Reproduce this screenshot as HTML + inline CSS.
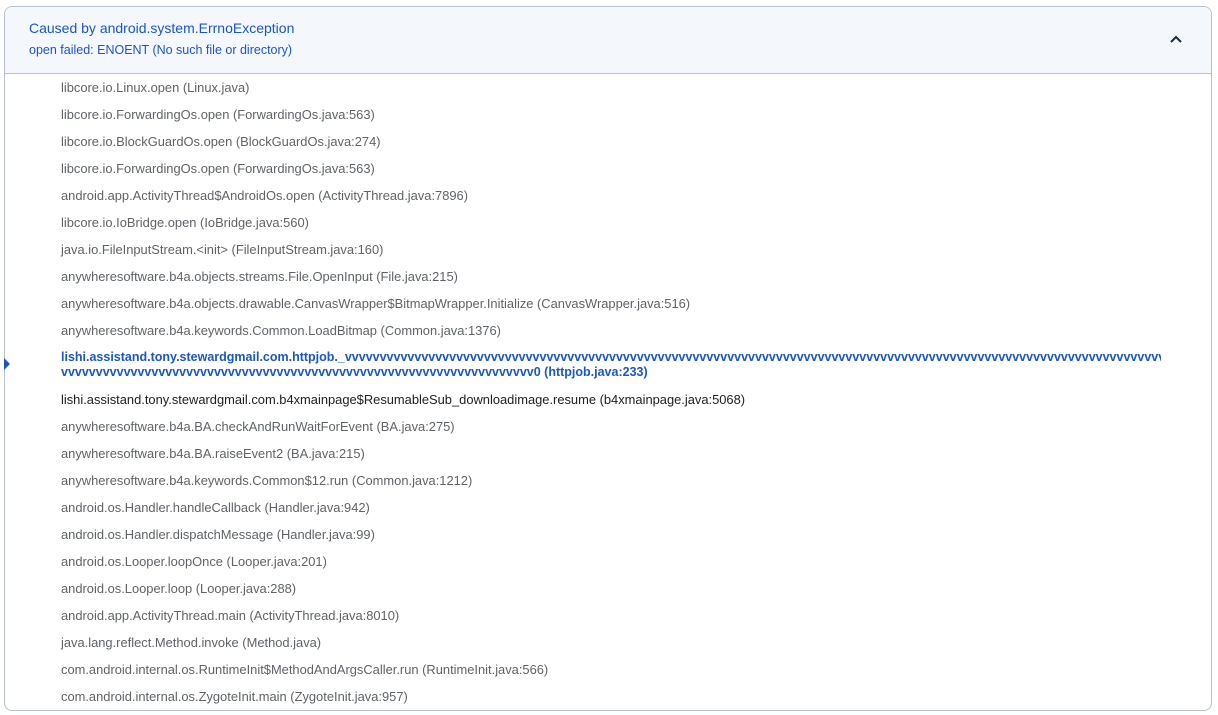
<!DOCTYPE html>
<html><head><meta charset="utf-8"><style>
body{margin:0;background:#fff;font-family:"Liberation Sans",Arial,sans-serif;}
.box{position:absolute;left:4px;top:6px;width:1206px;height:703px;border:1px solid #b8c0cc;border-radius:8px;overflow:hidden;}
.hdr{height:66px;background:#f4f7fc;border-bottom:1px solid #b8c0cc;position:relative;}
.t1{position:absolute;left:24px;top:13px;font-size:14px;color:#1a56c8;}
.t2{position:absolute;left:24px;top:36px;font-size:12.5px;color:#1a56c8;}
.chev{position:absolute;right:29px;top:28px;}
.row{position:absolute;left:61px;font-size:12.9px;color:#5f6368;white-space:nowrap;}
.dark{color:#202124;}
.hl{font-weight:bold;color:#1a56c8;overflow:hidden;font-size:12.5px;}
.mark{position:absolute;left:4px;top:358px;width:0;height:0;border-top:6px solid transparent;border-bottom:6px solid transparent;border-left:6px solid #1a56c8;}
</style></head><body>
<div class="box">
<div class="hdr"><div class="t1">Caused by android.system.ErrnoException</div><div class="t2">open failed: ENOENT (No such file or directory)</div>
<svg class="chev" width="12" height="8" viewBox="0 0 12 8"><path d="M1 7L6 2L11 7" stroke="#1b2a3a" stroke-width="2" fill="none"/></svg></div>
</div>
<div class="mark"></div>
<div class="row" style="top:80px">libcore.io.Linux.open (Linux.java)</div>
<div class="row" style="top:107px">libcore.io.ForwardingOs.open (ForwardingOs.java:563)</div>
<div class="row" style="top:134px">libcore.io.BlockGuardOs.open (BlockGuardOs.java:274)</div>
<div class="row" style="top:161px">libcore.io.ForwardingOs.open (ForwardingOs.java:563)</div>
<div class="row" style="top:188px">android.app.ActivityThread$AndroidOs.open (ActivityThread.java:7896)</div>
<div class="row" style="top:215px">libcore.io.IoBridge.open (IoBridge.java:560)</div>
<div class="row" style="top:242px">java.io.FileInputStream.&lt;init&gt; (FileInputStream.java:160)</div>
<div class="row" style="top:269px">anywheresoftware.b4a.objects.streams.File.OpenInput (File.java:215)</div>
<div class="row" style="top:296px">anywheresoftware.b4a.objects.drawable.CanvasWrapper$BitmapWrapper.Initialize (CanvasWrapper.java:516)</div>
<div class="row" style="top:323px">anywheresoftware.b4a.keywords.Common.LoadBitmap (Common.java:1376)</div>
<div class="row hl" style="top:350px;width:1100px">lishi.assistand.tony.stewardgmail.com.httpjob._vvvvvvvvvvvvvvvvvvvvvvvvvvvvvvvvvvvvvvvvvvvvvvvvvvvvvvvvvvvvvvvvvvvvvvvvvvvvvvvvvvvvvvvvvvvvvvvvvvvvvvvvvvvvvvvvvvvvvvvvvvvvvvvvvvvvvvvvvvvvvvvvvvvvvvvvvvvvvvvvvvvvv</div>
<div class="row hl" style="top:365px">vvvvvvvvvvvvvvvvvvvvvvvvvvvvvvvvvvvvvvvvvvvvvvvvvvvvvvvvvvvvvvvvvvvv0 (httpjob.java:233)</div>
<div class="row dark" style="top:392px">lishi.assistand.tony.stewardgmail.com.b4xmainpage$ResumableSub_downloadimage.resume (b4xmainpage.java:5068)</div>
<div class="row" style="top:419px">anywheresoftware.b4a.BA.checkAndRunWaitForEvent (BA.java:275)</div>
<div class="row" style="top:446px">anywheresoftware.b4a.BA.raiseEvent2 (BA.java:215)</div>
<div class="row" style="top:473px">anywheresoftware.b4a.keywords.Common$12.run (Common.java:1212)</div>
<div class="row" style="top:500px">android.os.Handler.handleCallback (Handler.java:942)</div>
<div class="row" style="top:527px">android.os.Handler.dispatchMessage (Handler.java:99)</div>
<div class="row" style="top:554px">android.os.Looper.loopOnce (Looper.java:201)</div>
<div class="row" style="top:581px">android.os.Looper.loop (Looper.java:288)</div>
<div class="row" style="top:608px">android.app.ActivityThread.main (ActivityThread.java:8010)</div>
<div class="row" style="top:635px">java.lang.reflect.Method.invoke (Method.java)</div>
<div class="row" style="top:662px">com.android.internal.os.RuntimeInit$MethodAndArgsCaller.run (RuntimeInit.java:566)</div>
<div class="row" style="top:689px">com.android.internal.os.ZygoteInit.main (ZygoteInit.java:957)</div>
</body></html>
